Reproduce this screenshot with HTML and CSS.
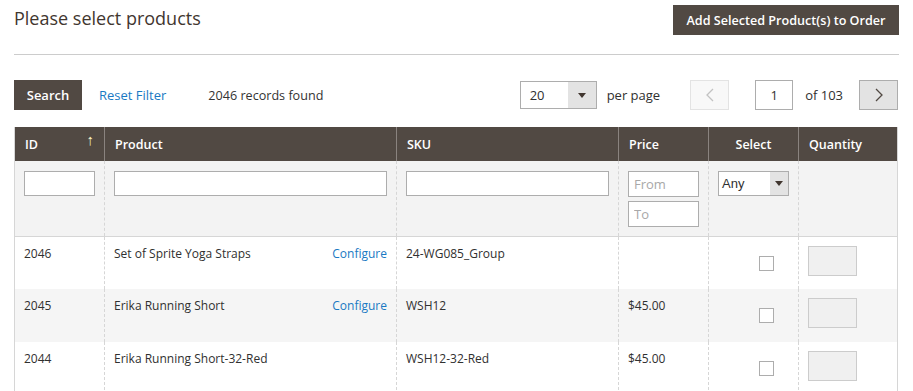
FILE: index.html
```html
<!DOCTYPE html>
<html lang="en">
<head>
    <meta charset="UTF-8">
    <title>Please select products</title>
    <link rel="stylesheet" href="styles.css">
</head>
<body>
    <div class="page">
        <div class="page-head">
            <h1>Please select products</h1>
            <button class="btn-dark btn-add">Add Selected Product(s) to Order</button>
        </div>

        <div class="toolbar">
            <div class="toolbar-left">
                <button class="btn-dark btn-search">Search</button>
                <a href="#" class="reset">Reset Filter</a>
                <span class="records">2046 records found</span>
            </div>
            <div class="toolbar-right">
                <div class="limit">
                    <span class="limit-value">20</span>
                    <span class="limit-arrow"><span class="caret"></span></span>
                </div>
                <span class="per-page">per page</span>
                <button class="pager prev" disabled>
                    <svg width="8" height="14" viewBox="0 0 8 14"><path d="M7 1 1 7l6 6" fill="none" stroke="currentColor" stroke-width="1.3"/></svg>
                </button>
                <input class="page-input" type="text" value="1">
                <span class="of-pages">of 103</span>
                <button class="pager next">
                    <svg width="8" height="14" viewBox="0 0 8 14"><path d="M1 1l6 6-6 6" fill="none" stroke="currentColor" stroke-width="1.3"/></svg>
                </button>
            </div>
        </div>

        <table class="grid">
            <thead>
                <tr>
                    <th class="col-id">ID <span class="sort">&#8593;</span></th>
                    <th class="col-product">Product</th>
                    <th class="col-sku">SKU</th>
                    <th class="col-price">Price</th>
                    <th class="col-select">Select</th>
                    <th class="col-qty">Quantity</th>
                </tr>
            </thead>
            <tbody>
                <tr class="filters">
                    <td><input class="filter-input" type="text"></td>
                    <td><input class="filter-input" type="text"></td>
                    <td><input class="filter-input" type="text"></td>
                    <td>
                        <input class="filter-input range" type="text" placeholder="From">
                        <input class="filter-input range" type="text" placeholder="To">
                    </td>
                    <td>
                        <div class="any-select">
                            <span class="any-value">Any</span>
                            <span class="any-arrow"><span class="caret"></span></span>
                        </div>
                    </td>
                    <td></td>
                </tr>
                <tr>
                    <td>2046</td>
                    <td><div class="product-cell"><span>Set of Sprite Yoga Straps</span><a href="#">Configure</a></div></td>
                    <td>24-WG085_Group</td>
                    <td></td>
                    <td class="cell-check"><span class="checkbox"></span></td>
                    <td class="cell-qty"><input class="qty" type="text" disabled></td>
                </tr>
                <tr class="odd">
                    <td>2045</td>
                    <td><div class="product-cell"><span>Erika Running Short</span><a href="#">Configure</a></div></td>
                    <td>WSH12</td>
                    <td>$45.00</td>
                    <td class="cell-check"><span class="checkbox"></span></td>
                    <td class="cell-qty"><input class="qty" type="text" disabled></td>
                </tr>
                <tr>
                    <td>2044</td>
                    <td><div class="product-cell"><span>Erika Running Short-32-Red</span></div></td>
                    <td>WSH12-32-Red</td>
                    <td>$45.00</td>
                    <td class="cell-check"><span class="checkbox"></span></td>
                    <td class="cell-qty"><input class="qty" type="text" disabled></td>
                </tr>
            </tbody>
        </table>
    </div>
</body>
</html>
```

FILE: styles.css
```css
body {
    margin: 0;
    font-family: "Open Sans", Arial, sans-serif;
    font-size: 13px;
    color: #303030;
    background: #fff;
}
.page {
    padding: 0 14px 0 14px;
}
.page-head {
    display: flex;
    justify-content: space-between;
    align-items: flex-start;
    padding-top: 5px;
    height: 49px;
    border-bottom: 1px solid #cccccc;
}
h1 {
    margin: 0;
    font-size: 18px;
    font-weight: 400;
    color: #41362f;
    line-height: 26px;
}
.btn-dark {
    background: #514943;
    color: #fff;
    border: 0;
    font-family: "Open Sans", Arial, sans-serif;
    font-weight: 600;
    font-size: 13px;
    height: 30px;
    cursor: pointer;
}
.btn-add {
    width: 226px;
    padding: 0;
    font-size: 12.6px;
}
.toolbar {
    display: flex;
    justify-content: space-between;
    align-items: center;
    margin-top: 25px;
    margin-right: 1px;
    height: 30px;
}
.toolbar-left, .toolbar-right {
    display: flex;
    align-items: center;
}
.btn-search {
    width: 68px;
}
.reset {
    color: #1979c3;
    text-decoration: none;
    margin-left: 17px;
}
.records {
    margin-left: 42px;
    color: #333;
    font-size: 12.6px;
}
.limit {
    display: flex;
    width: 75px;
    height: 26px;
    border: 1px solid #adadad;
}
.limit-value {
    flex: 1;
    padding-left: 9px;
    line-height: 26px;
}
.limit-arrow {
    width: 28px;
    background: #e3e3e3;
    display: flex;
    align-items: center;
    justify-content: center;
}
.caret {
    width: 0;
    height: 0;
    border-left: 4px solid transparent;
    border-right: 4px solid transparent;
    border-top: 5px solid #41362f;
}
.per-page {
    margin-left: 10px;
    margin-right: 30px;
}
.pager {
    width: 39px;
    height: 30px;
    display: flex;
    align-items: center;
    justify-content: center;
    padding: 0;
}
.prev {
    background: #f8f8f8;
    border: 1px solid #e3e3e3;
    color: #c2c2c2;
}
.next {
    background: #e3e3e3;
    border: 1px solid #adadad;
    color: #514943;
}
.page-input {
    width: 38px;
    height: 30px;
    box-sizing: border-box;
    margin-left: 26px;
    border: 1px solid #adadad;
    text-align: center;
    font-family: "Open Sans", Arial, sans-serif;
    font-size: 13px;
    color: #303030;
    padding: 0;
}
.of-pages {
    margin-left: 12px;
    margin-right: 16px;
}
.grid {
    margin-top: 17px;
    width: 884px;
    border-collapse: collapse;
    table-layout: fixed;
    border-left: 1px solid #d6d6d6;
    border-right: 1px solid #d6d6d6;
}
.grid th {
    background: #514943;
    color: #fff;
    font-weight: 600;
    font-size: 12.5px;
    text-align: left;
    height: 34px;
    padding: 0 10px;
    border-left: 1px solid #8a837f;
    box-sizing: border-box;
}
.grid th:first-child {
    border-left: 0;
}
.grid th.col-select {
    text-align: center;
}
.col-id { width: 90px; }
.col-product { width: 292px; }
.col-sku { width: 222px; }
.col-price { width: 90px; }
.col-select { width: 90px; }
.sort {
    float: right;
    color: #fff5c4;
    font-weight: 400;
    font-size: 15px;
    line-height: 14px;
    margin-top: -4px;
}
.grid td {
    vertical-align: top;
    box-sizing: border-box;
    padding: 9px 9px 0;
    height: 53px;
    border-left: 1px dashed #d6d6d6;
    font-size: 12px;
    line-height: 15px;
}
.grid td:first-child {
    border-left: 0;
}
.grid .filters td {
    background: #f3f3f3;
    height: 75px;
    border-bottom: 1px solid #d6d6d6;
    padding-top: 10px;
}
.filter-input {
    display: block;
    width: 100%;
    height: 25px;
    box-sizing: border-box;
    border: 1px solid #adadad;
    background: #fff;
    font-family: "Open Sans", Arial, sans-serif;
    font-size: 13px;
    padding: 0 5px;
}
.filter-input.range {
    width: 71px;
    margin-bottom: 4px;
    height: 26px;
}
.filter-input::placeholder {
    color: #a8a8a8;
}
.any-select {
    display: flex;
    width: 71px;
    height: 25px;
    box-sizing: border-box;
    border: 1px solid #adadad;
    background: #fff;
}
.any-value {
    flex: 1;
    font-family: Arial, "Liberation Sans", sans-serif;
    font-size: 13px;
    line-height: 23px;
    padding-left: 3px;
    color: #303030;
}
.any-arrow {
    width: 18px;
    background: #e3e3e3;
    display: flex;
    align-items: center;
    justify-content: center;
}
.product-cell {
    display: flex;
    justify-content: space-between;
}
.product-cell a {
    color: #1979c3;
    text-decoration: none;
}
.odd td {
    background: #f5f5f5;
}
.grid td.cell-check {
    padding-left: 50px;
}
.checkbox {
    display: block;
    width: 13px;
    height: 13px;
    border: 1px solid #adadad;
    background: #fff;
    margin-top: 10px;
}
.grid td.cell-qty {
    padding-top: 9px;
}
.qty {
    display: block;
    width: 49px;
    height: 30px;
    box-sizing: border-box;
    border: 1px solid #cccccc;
    background: #f0f0f0;
    padding: 0;
}
```
